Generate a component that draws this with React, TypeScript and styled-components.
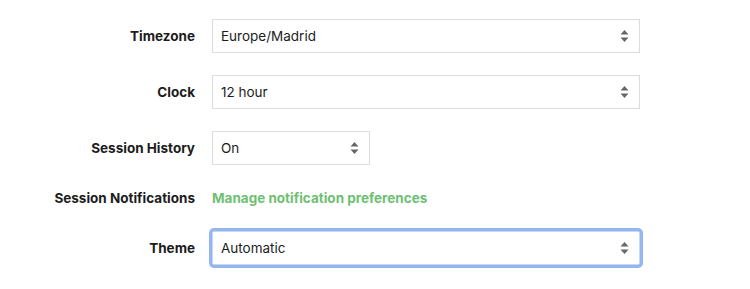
import React from "react";
import styled, { createGlobalStyle, css } from "styled-components";

const Global = createGlobalStyle`
  html, body { margin: 0; padding: 0; background: #fff; }
  body { font-family: "Inter", "Liberation Sans", sans-serif; color: #222; }
`;

const Form = styled.div`
  display: grid;
  grid-template-columns: 195px auto;
  column-gap: 17px;
  row-gap: 22px;
  padding: 19px 0 24px;
  align-items: center;
`;

const Label = styled.div`
  text-align: right;
  font-weight: 700;
  font-size: 13.5px;
  color: #1c1c1c;
  white-space: nowrap;
`;

const Field = styled.div<{ $width: number; $focused?: boolean }>`
  box-sizing: border-box;
  width: ${(p) => p.$width}px;
  height: 34px;
  border: 1px solid #dcdcdc;
  background: #fff;
  display: flex;
  align-items: center;
  padding: 0 10px 0 8px;
  font-size: 13.5px;
  color: #1c1c1c;
  ${(p) =>
    p.$focused &&
    css`
      border-color: #c8d7f2;
      border-radius: 2px;
      box-shadow: 0 0 0 3px #94b6f1;
    `}
`;

const Value = styled.span`
  flex: 1;
`;

const Arrows = styled.svg`
  width: 9px;
  height: 14px;
  flex: none;
`;

const LinkCell = styled.a`
  font-size: 13.5px;
  font-weight: 700;
  color: #6fbf73;
  text-decoration: none;
  line-height: 22px;
  height: 22px;
`;

function Select({ value, width, focused }: { value: string; width: number; focused?: boolean }) {
  return (
    <Field $width={width} $focused={focused}>
      <Value>{value}</Value>
      <Arrows viewBox="0 0 9 14">
        <path d="M4.5 1 L8.5 5.5 L0.5 5.5 Z" fill="#666" />
        <path d="M4.5 13 L8.5 8.5 L0.5 8.5 Z" fill="#666" />
      </Arrows>
    </Field>
  );
}

export default function App() {
  return (
    <>
      <Global />
      <Form>
        <Label>Timezone</Label>
        <Select value="Europe/Madrid" width={428} />
        <Label>Clock</Label>
        <Select value="12 hour" width={428} />
        <Label>Session History</Label>
        <Select value="On" width={158} />
        <Label>Session Notifications</Label>
        <LinkCell href="#">Manage notification preferences</LinkCell>
        <Label>Theme</Label>
        <Select value="Automatic" width={428} focused />
      </Form>
    </>
  );
}
